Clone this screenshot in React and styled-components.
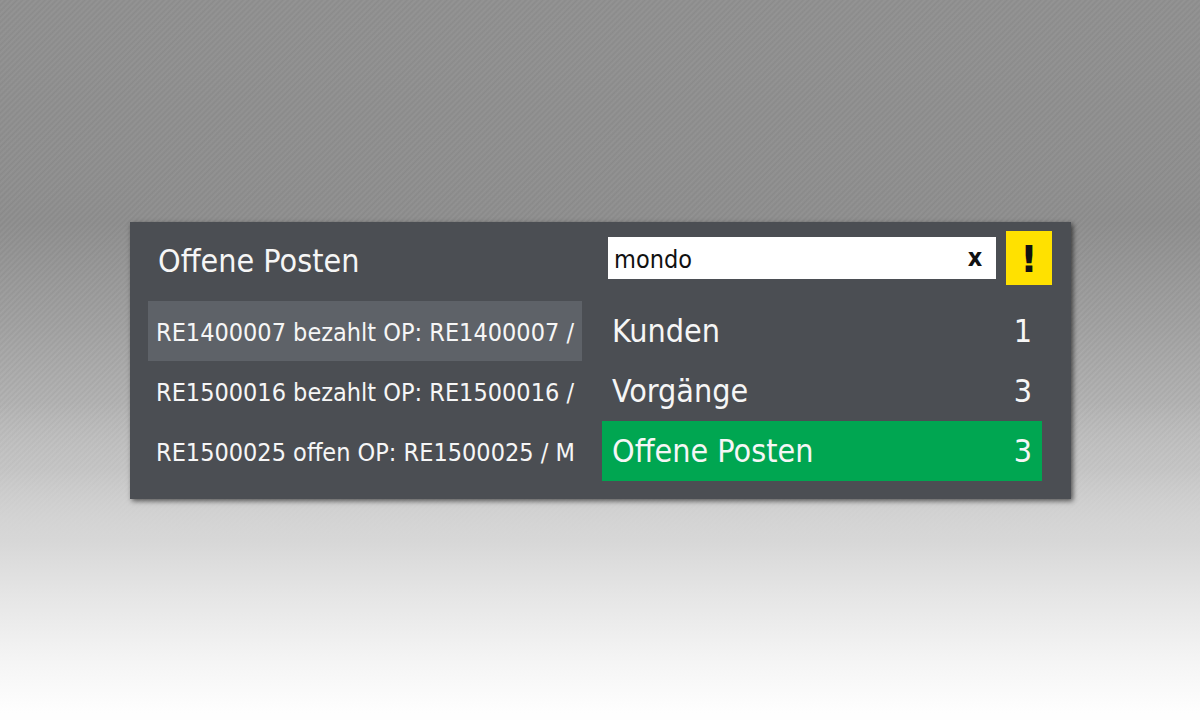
import React, { useState } from 'react';
import styled, { createGlobalStyle, css } from 'styled-components';

const GlobalStyle = createGlobalStyle`
  * {
    box-sizing: border-box;
  }
  body {
    margin: 0;
    font-family: "DejaVu Sans Condensed", "Noto Sans", sans-serif;
    color: #f6f6f6;
  }
  button, input {
    font: inherit;
    border: 0;
    border-radius: 0;
  }
`;

/* the stripes fade out towards the white lower part */
const Desktop = styled.main`
  display: flex;
  align-items: center;
  justify-content: center;
  min-height: 100vh;
  padding: 0 129px 0 130px;
  background:
    linear-gradient(to bottom, rgba(179, 179, 179, 0) 56%, rgba(196, 196, 196, 0.4) 65%, #d7d7d7 75%, #e6e6e6 83%, #f5f5f5 92%, #fefefe 99%),
    repeating-linear-gradient(135deg, rgba(0, 0, 0, 0.04) 0, rgba(255, 255, 255, 0.03) 2px, rgba(0, 0, 0, 0.04) 4px),
    linear-gradient(to bottom, #919191 0%, #8f8f8f 31%, #a3a3a3 46%, #b3b3b3 56%, #c6c6c6 65%, #d7d7d7 75%);
`;

const Panel = styled.section`
  display: grid;
  grid-template-columns: minmax(0, 434fr) minmax(0, 450fr);
  gap: 16px 20px;
  width: 100%;
  max-width: 1400px;
  padding: 9px 19px 18px 18px;
  background: #4b4e53;
  box-shadow: 2px 2px 5px rgba(0, 0, 0, 0.6);
`;

const Title = styled.h1`
  margin: 0;
  padding: 6px 10px 0;
  font-size: 32px;
  font-weight: 400;
  line-height: 48px;
`;

const Toolbar = styled.form`
  display: flex;
  align-items: center;
  gap: 10px;
  padding-left: 6px;
`;

const SearchBox = styled.div`
  display: flex;
  flex: 1;
  min-width: 0;
  height: 42px;
  background: #fff;
`;

const SearchInput = styled.input`
  flex: 1;
  min-width: 0;
  padding: 4px 6px 0;
  background: transparent;
  color: #111;
  font-size: 25px;
  outline: none;
`;

const ClearButton = styled.button`
  width: 42px;
  padding: 0;
  background: transparent;
  color: #111;
  font-size: 25px;
  font-weight: 700;
  line-height: 42px;
`;

const AlertButton = styled.button`
  width: 46px;
  height: 54px;
  padding: 0;
  background: #ffe100;
  color: #111;
  font-family: "DejaVu Sans", sans-serif;
  font-size: 38px;
  font-weight: 700;
  line-height: 56px;
`;

const List = styled.ul`
  margin: 0;
  padding: 0;
  list-style: none;
`;

const Categories = styled(List)`
  margin-right: 10px;
`;

const rowStyle = css`
  display: block;
  width: 100%;
  height: 60px;
  color: #f6f6f6;
  text-align: left;
  line-height: 60px;
  white-space: nowrap;
  overflow: hidden;
`;

const Result = styled.button`
  ${rowStyle}
  padding: 2px 0 0 8px;
  background: ${({ $active }) => ($active ? '#5e6268' : 'transparent')};
  font-size: 25px;
`;

const Category = styled.button`
  ${rowStyle}
  display: flex;
  justify-content: space-between;
  padding: 0 10px;
  background: ${({ $active }) => ($active ? '#00a651' : 'transparent')};
  font-size: 32px;
`;

const results = [
  'RE1400007 bezahlt OP: RE1400007 /',
  'RE1500016 bezahlt OP: RE1500016 /',
  'RE1500025 offen OP: RE1500025 / M',
];

const categories = [
  { name: 'Kunden', count: 1 },
  { name: 'Vorgänge', count: 3 },
  { name: 'Offene Posten', count: 3 },
];

const App = () => {
  const [query, setQuery] = useState('mondo');
  const [result, setResult] = useState(0);
  const [category, setCategory] = useState(2);

  return (
    <>
      <GlobalStyle />
      <Desktop>
        <Panel>
          <Title>{categories[category].name}</Title>
          <Toolbar onSubmit={e => e.preventDefault()}>
            <SearchBox>
              <SearchInput
                aria-label="Suche"
                value={query}
                onChange={e => setQuery(e.target.value)}
              />
              <ClearButton type="button" aria-label="Suche leeren" onClick={() => setQuery('')}>x</ClearButton>
            </SearchBox>
            <AlertButton type="button" aria-label="Hinweise">!</AlertButton>
          </Toolbar>
          <List>
            {results.map((text, i) => (
              <li key={text}>
                <Result type="button" $active={i === result} onClick={() => setResult(i)}>{text}</Result>
              </li>
            ))}
          </List>
          <Categories>
            {categories.map(({ name, count }, i) => (
              <li key={name}>
                <Category type="button" $active={i === category} onClick={() => setCategory(i)}>
                  <span>{name}</span>
                  <span>{count}</span>
                </Category>
              </li>
            ))}
          </Categories>
        </Panel>
      </Desktop>
    </>
  );
};

export default App;
